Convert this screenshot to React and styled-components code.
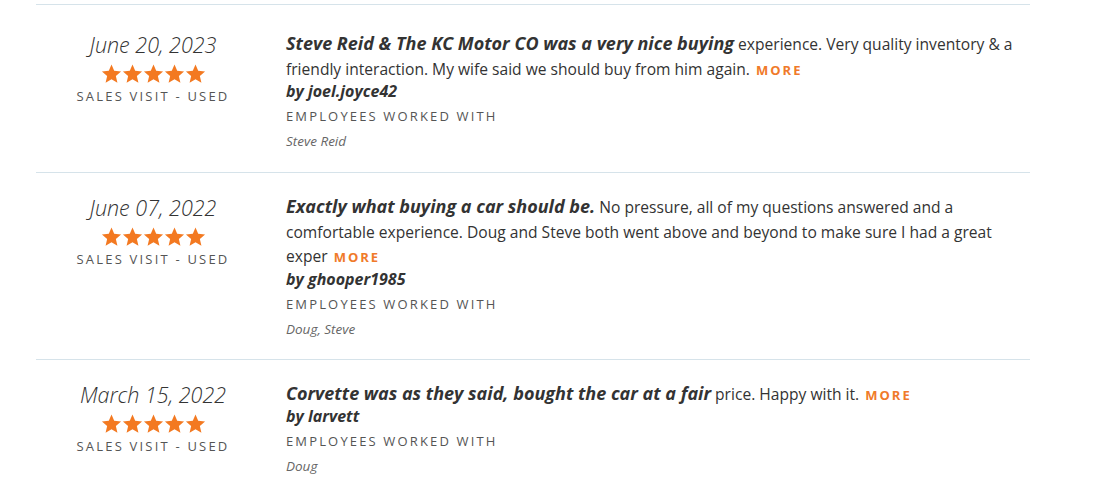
import React from "react";
import styled, { createGlobalStyle } from "styled-components";

const Global = createGlobalStyle`
  body { margin: 0; background: #fff; font-family: "Open Sans", Lato, sans-serif; color: #333; }
`;

const List = styled.div`
  width: 994px;
  margin-left: 36px;
  padding-top: 4px;
`;

const Row = styled.div`
  display: flex;
  border-top: 1px solid #d6e3ea;
  padding-top: ${(p) => (p.$first ? 27 : 22)}px;
  padding-bottom: ${(p) => (p.$first ? 19 : 18)}px;
`;

const Meta = styled.div`
  width: 234px;
  flex: none;
  display: flex;
  flex-direction: column;
  align-items: center;
`;

const DateText = styled.div`
  font-size: 21.5px;
  font-style: italic;
  font-weight: 300;
  line-height: 26px;
  color: #333;
`;

const Stars = styled.div`
  display: flex;
  margin-top: 6px;
`;

const Visit = styled.div`
  font-size: 13px;
  letter-spacing: 2.2px;
  color: #555;
  line-height: 18px;
  margin-top: 3px;
`;

const Body = styled.div`
  flex: 1;
  padding-left: 16px;
  padding-right: 10px;
`;

const Text = styled.p`
  margin: 0;
  font-size: 15.6px;
  line-height: 24.5px;
  color: #333;
`;

const Lead = styled.strong`
  font-weight: 700;
  font-style: italic;
  font-size: 18px;
  line-height: 1;
`;

const More = styled.a`
  color: #f07a2a;
  font-weight: 700;
  font-size: 13px;
  letter-spacing: 2px;
  margin-left: 2px;
  line-height: 1;
`;

const Author = styled.div`
  font-size: 16px;
  font-weight: 700;
  font-style: italic;
  line-height: 21px;
  color: #333;
`;

const Label = styled.div`
  font-size: 13px;
  letter-spacing: 2.15px;
  color: #555;
  line-height: 25px;
  margin-top: 2px;
`;

const Staff = styled.div`
  font-size: 13.5px;
  font-style: italic;
  color: #666;
  line-height: 24px;
`;

const Star = () => (
  <svg width="21" height="20" viewBox="0 0 24 23">
    <path
      d="M12 0.5l3.1 7.3 7.9.7-6 5.2 1.8 7.8L12 17.4l-6.8 4.1L7 13.7 1 8.5l7.9-.7z"
      fill="#f37921"
    />
  </svg>
);

const reviews = [
  {
    date: "June 20, 2023",
    lead: "Steve Reid & The KC Motor CO was a very nice buying",
    rest: " experience. Very quality inventory & a friendly interaction. My wife said we should buy from him again.",
    by: "by joel.joyce42",
    staff: "Steve Reid",
  },
  {
    date: "June 07, 2022",
    lead: "Exactly what buying a car should be.",
    rest: " No pressure, all of my questions answered and a comfortable experience. Doug and Steve both went above and beyond to make sure I had a great exper",
    by: "by ghooper1985",
    staff: "Doug, Steve",
  },
  {
    date: "March 15, 2022",
    lead: "Corvette was as they said, bought the car at a fair",
    rest: " price. Happy with it.",
    by: "by larvett",
    staff: "Doug",
  },
];

export default function App() {
  return (
    <>
      <Global />
      <List>
        {reviews.map((r, i) => (
          <Row key={i} $first={i === 0}>
            <Meta>
              <DateText>{r.date}</DateText>
              <Stars>
                {[0, 1, 2, 3, 4].map((s) => (
                  <Star key={s} />
                ))}
              </Stars>
              <Visit>SALES VISIT - USED</Visit>
            </Meta>
            <Body>
              <Text>
                <Lead>{r.lead}</Lead>
                {r.rest} <More>MORE</More>
              </Text>
              <Author>{r.by}</Author>
              <Label>EMPLOYEES WORKED WITH</Label>
              <Staff>{r.staff}</Staff>
            </Body>
          </Row>
        ))}
      </List>
    </>
  );
}
